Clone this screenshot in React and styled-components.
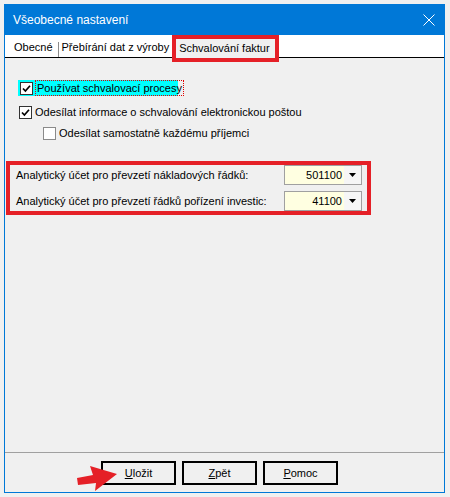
import React from 'react';
import styled, { createGlobalStyle } from 'styled-components';

const Global = createGlobalStyle`
  html, body { margin: 0; padding: 0; background: #f0f0f0; }
  body { font-family: "Liberation Sans", Arial, sans-serif; color: #000; }
`;

const Page = styled.div`
  width: 450px;
  height: 497px;
  padding: 4px 0 0 4px;
  box-sizing: border-box;
`;

const Window = styled.div`
  width: 441px;
  height: 489px;
  box-sizing: border-box;
  border: 1px solid #0078d7;
  border-top: none;
  display: flex;
  flex-direction: column;
  background: #f0f0f0;
`;

const TitleBar = styled.div`
  height: 31px;
  flex: none;
  background: #0078d7;
  color: #fff;
  display: flex;
  align-items: center;
  justify-content: space-between;
  padding: 1px 9px 0 8px;
  box-sizing: border-box;
  font-size: 12px;
`;

const CloseIcon = styled.svg`
  width: 12px;
  height: 12px;
  display: block;
`;

const TabStrip = styled.div`
  height: 23px;
  flex: none;
  box-sizing: border-box;
  background: #fff;
  border-bottom: 1px solid #000;
  display: flex;
  align-items: flex-end;
  padding-left: 9px;
  font-size: 11px;
`;

const Tab = styled.div`
  height: 19px;
  line-height: 19px;
  padding: ${p => p.$pad};
  white-space: nowrap;
`;

const TabSep = styled.div`
  width: 1px;
  height: 15px;
  background: #8c8c8c;
  align-self: center;
  margin-top: 6px;
`;

const ActiveTab = styled.div`
  position: relative;
  height: 19px;
  line-height: 19px;
  margin-bottom: -1px;
  margin-left: 7px;
  padding: 0 5px 0 3px;
  background: #f0f0f0;
  white-space: nowrap;
  &::after {
    content: '';
    position: absolute;
    inset: -4px;
    border: 4px solid #e52027;
    z-index: 2;
    pointer-events: none;
  }
`;

const Content = styled.div`
  flex: 1;
  display: flex;
  flex-direction: column;
  padding: 22px 0 0 0;
  font-size: 11px;
`;

const CheckRow = styled.div`
  display: flex;
  align-items: center;
  height: 16px;
  margin-left: ${p => p.$indent}px;
  margin-top: ${p => p.$top || 0}px;
  gap: 3px;
  white-space: nowrap;
`;

const Highlight = styled.div`
  display: flex;
  align-items: center;
  gap: 3px;
  height: 16px;
  width: 160px;
  padding-left: 2px;
  box-sizing: border-box;
  background: #00ffff;
`;

const Box = styled.span`
  width: 13px;
  height: 13px;
  box-sizing: border-box;
  border: 1px solid ${p => (p.$checked ? '#333' : '#8a8a8a')};
  background: #fff;
  display: inline-flex;
  align-items: center;
  justify-content: center;
  flex: none;
`;

const FocusText = styled.span`
  outline: 1px dotted #e00000;
  padding: 0 1px;
  line-height: 14px;
`;

const AccountBox = styled.div`
  margin: 20px 0 0 1px;
  width: 365px;
  box-sizing: border-box;
  border: 4px solid #e52027;
  display: flex;
  flex-direction: column;
  gap: 6px;
  padding: 0 5px 0 6px;
`;

const AccountRow = styled.div`
  display: flex;
  align-items: center;
  justify-content: space-between;
  height: 20px;
  white-space: nowrap;
`;

const Combo = styled.div`
  width: 78px;
  height: 20px;
  box-sizing: border-box;
  border: 1px solid #a0a0a0;
  background: #ffffe1;
  display: flex;
`;

const ComboValue = styled.span`
  flex: 1;
  text-align: right;
  padding-right: 2px;
  line-height: 18px;
`;

const ComboButton = styled.span`
  width: 17px;
  background: #f6f6f6;
  display: flex;
  align-items: center;
  justify-content: center;
`;

const Footer = styled.div`
  position: relative;
  height: 40px;
  flex: none;
  box-sizing: border-box;
  border-top: 1px solid #a0a0a0;
  display: flex;
  gap: 6px;
  padding: 8px 0 0 96px;
  font-size: 11px;
`;

const Button = styled.button`
  width: 75px;
  height: 24px;
  box-sizing: border-box;
  border: 1px solid #000;
  box-shadow: inset 0 0 0 1px #000;
  background: #f0f0f0;
  font: inherit;
  color: #000;
  padding: 0;
  cursor: default;
`;

const ArrowSvg = styled.svg`
  position: absolute;
  left: 65px;
  top: 8px;
  width: 50px;
  height: 32px;
`;

const Check = () => (
  <svg width="9" height="9" viewBox="0 0 9 9">
    <polyline points="1,4.5 3.4,7 8,1.8" fill="none" stroke="#000" strokeWidth="1.7" />
  </svg>
);

const Checkbox = ({ checked }) => <Box $checked={checked}>{checked && <Check />}</Box>;

const DropArrow = () => (
  <svg width="7" height="4" viewBox="0 0 7 4">
    <polygon points="0,0 7,0 3.5,4" fill="#000" />
  </svg>
);

const AccountField = ({ label, value }) => (
  <AccountRow>
    <span>{label}</span>
    <Combo>
      <ComboValue>{value}</ComboValue>
      <ComboButton><DropArrow /></ComboButton>
    </Combo>
  </AccountRow>
);

export default function App() {
  return (
    <>
      <Global />
      <Page>
        <Window>
          <TitleBar>
            <span>Všeobecné nastavení</span>
            <CloseIcon viewBox="0 0 12 12">
              <path d="M0.5 0.5 L11.5 11.5 M11.5 0.5 L0.5 11.5" stroke="#fff" strokeWidth="1" />
            </CloseIcon>
          </TitleBar>
          <TabStrip>
            <Tab $pad="0 5px 0 0">Obecné</Tab>
            <TabSep />
            <Tab $pad="0 0 0 3px">Přebírání dat z výroby</Tab>
            <ActiveTab>Schvalování faktur</ActiveTab>
          </TabStrip>
          <Content>
            <CheckRow $indent={13}>
              <Highlight>
                <Checkbox checked />
                <FocusText>Používat schvalovací procesy</FocusText>
              </Highlight>
            </CheckRow>
            <CheckRow $indent={14} $top={8}>
              <Checkbox checked />
              <span>Odesílat informace o schvalování elektronickou poštou</span>
            </CheckRow>
            <CheckRow $indent={38} $top={5}>
              <Checkbox />
              <span>Odesílat samostatně každému příjemci</span>
            </CheckRow>
            <AccountBox>
              <AccountField label="Analytický účet pro převzetí nákladových řádků:" value="501100" />
              <AccountField label="Analytický účet pro převzetí řádků pořízení investic:" value="41100" />
            </AccountBox>
          </Content>
          <Footer>
            <Button><u>U</u>ložit</Button>
            <Button><u>Z</u>pět</Button>
            <Button><u>P</u>omoc</Button>
            <ArrowSvg viewBox="70 460 50 32">
              <polygon points="77,477 93,474 90,465 117,473 95,490 96,482 78,484" fill="#e52027" />
            </ArrowSvg>
          </Footer>
        </Window>
      </Page>
    </>
  );
}
